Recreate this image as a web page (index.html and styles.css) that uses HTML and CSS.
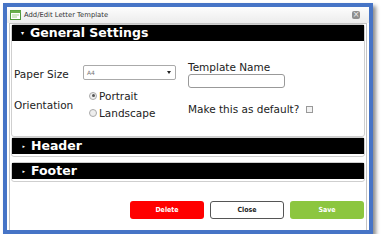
FILE: index.html
```html
<!DOCTYPE html>
<html lang="en">
<head>
  <meta charset="UTF-8" />
  <title>Add/Edit Letter Template</title>
  <link rel="stylesheet" href="styles.css">
</head>
<body>

  <div class="window">
    <!-- title bar -->
    <div class="titlebar">
      <svg class="title-icon" width="11" height="10" viewBox="0 0 11 10">
        <rect x="0.5" y="0.5" width="10" height="9" fill="#fff" stroke="#4f9a3a"/>
        <rect x="0.5" y="0.5" width="10" height="2.5" fill="#6ab04c"/>
        <rect x="2" y="4.5" width="7" height="1" fill="#a7d18f"/>
        <rect x="2" y="6.5" width="5" height="1" fill="#a7d18f"/>
      </svg>
      <span class="title">Add/Edit Letter Template</span>
      <span class="close-btn">&times;</span>
    </div>

    <div class="content">
      <!-- General Settings -->
      <div class="section">
        <div class="section-head"><span class="caret">&#9662;</span>General Settings</div>
        <div class="section-body">
          <div class="col-left">
            <div class="field">
              <label>Paper Size</label>
              <div class="select">A4<span class="select-arrow"></span></div>
            </div>
            <div class="field">
              <label>Orientation</label>
              <div class="radios">
                <div class="radio-row"><span class="radio checked"></span>Portrait</div>
                <div class="radio-row"><span class="radio"></span>Landscape</div>
              </div>
            </div>
          </div>
          <div class="col-right">
            <label>Template Name</label>
            <div class="text-input"></div>
            <div class="default-row">Make this as default? <span class="checkbox"></span></div>
          </div>
        </div>
      </div>

      <div class="section collapsed">
        <div class="section-head"><span class="caret small">&#9656;</span>Header</div>
      </div>

      <div class="section collapsed">
        <div class="section-head"><span class="caret small">&#9656;</span>Footer</div>
      </div>

      <div class="buttons">
        <button class="btn btn-delete">Delete</button>
        <button class="btn btn-close">Close</button>
        <button class="btn btn-save">Save</button>
      </div>
    </div>
  </div>

</body>
</html>
```

FILE: styles.css
```css
body {
  margin: 0;
  background-color: #fff;
  font-family: "DejaVu Sans", Verdana, sans-serif;
  color: #222;
}
.window {
  margin: 3px 0 0 3px;
  width: 362px;
  height: 223px;
  border: 4px solid #4674c6;
  background-color: #fff;
  box-shadow: 3px 3px 4px rgba(0,0,0,0.45);
  display: flex;
  flex-direction: column;
}
/* title bar */
.titlebar {
  height: 16px;
  display: flex;
  align-items: center;
  padding: 0 9px 0 3px;
  background: linear-gradient(#fdfdfd, #ececec);
}
.title-icon {
  margin-right: 3px;
}
.title {
  flex-grow: 1;
  font-size: 6.8px;
  color: #333;
}
.close-btn {
  width: 8px;
  height: 8px;
  border-radius: 2px;
  background-color: #8e8e8e;
  color: #eee;
  font-size: 8px;
  line-height: 8px;
  text-align: center;
}
/* content */
.content {
  flex-grow: 1;
  margin: 0 2px;
  padding: 0 1px;
  border: 1px solid #c4c4c4;
  border-bottom: none;
  display: flex;
  flex-direction: column;
}
.section {
  border: 1px solid #cfcfcf;
  border-radius: 3px;
}
.section.collapsed {
  padding-bottom: 2px;
  margin-bottom: 5px;
}
.section-head {
  height: 16px;
  background-color: #000;
  color: #fff;
  font-weight: bold;
  font-size: 12.5px;
  line-height: 16px;
  display: flex;
  align-items: center;
}
.caret {
  font-size: 6px;
  width: 18px;
  text-align: right;
  padding-right: 6px;
  box-sizing: border-box;
}
.caret.small {
  font-size: 5px;
  width: 19px;
  padding-right: 6px;
}
.section-body {
  height: 95px;
  display: flex;
  font-size: 10.5px;
}
.col-left {
  width: 176px;
  padding: 24px 0 0 2px;
  box-sizing: border-box;
}
.field {
  display: flex;
  align-items: center;
  margin-bottom: 7px;
}
.field label {
  width: 69px;
  padding-top: 2px;
}
.select {
  width: 93px;
  height: 15px;
  box-sizing: border-box;
  border: 1px solid #aaa;
  border-radius: 2px;
  font-size: 6px;
  color: #777;
  padding-left: 3px;
  display: flex;
  align-items: center;
  justify-content: space-between;
}
.select-arrow {
  margin-right: 4px;
  border-left: 2px solid transparent;
  border-right: 2px solid transparent;
  border-top: 3px solid #222;
}
.radios {
  margin-left: 6px;
}
.radio-row {
  display: flex;
  align-items: center;
  height: 17px;
}
.radio {
  width: 6px;
  height: 6px;
  border: 1px solid #aaa;
  border-radius: 50%;
  background-color: #eee;
  margin-right: 2px;
  position: relative;
}
.radio.checked::after {
  content: "";
  position: absolute;
  left: 1.5px;
  top: 1.5px;
  width: 3px;
  height: 3px;
  border-radius: 50%;
  background-color: #555;
}
.col-right {
  padding-top: 20px;
  display: flex;
  flex-direction: column;
  align-items: flex-start;
}
.text-input {
  width: 97px;
  height: 14px;
  box-sizing: border-box;
  border: 1px solid #999;
  border-radius: 3px;
  margin-top: 1px;
}
.default-row {
  margin-top: 15px;
  display: flex;
  align-items: center;
}
.checkbox {
  width: 7px;
  height: 7px;
  box-sizing: border-box;
  border: 1px solid #999;
  background-color: #f2f2f2;
  margin-left: 7px;
}
/* buttons */
.buttons {
  display: flex;
  justify-content: flex-end;
  gap: 6px;
  padding: 14px 1px 0 0;
}
.btn {
  width: 74px;
  height: 18px;
  border-radius: 3px;
  border: none;
  font-family: "DejaVu Sans Condensed", "DejaVu Sans", sans-serif;
  font-weight: bold;
  font-size: 7px;
  color: #fff;
  padding: 0;
}
.btn-delete {
  background-color: #ff0000;
}
.btn-close {
  background-color: #fff;
  border: 1px solid #555;
  color: #222;
}
.btn-save {
  background-color: #8cc63f;
}
```
